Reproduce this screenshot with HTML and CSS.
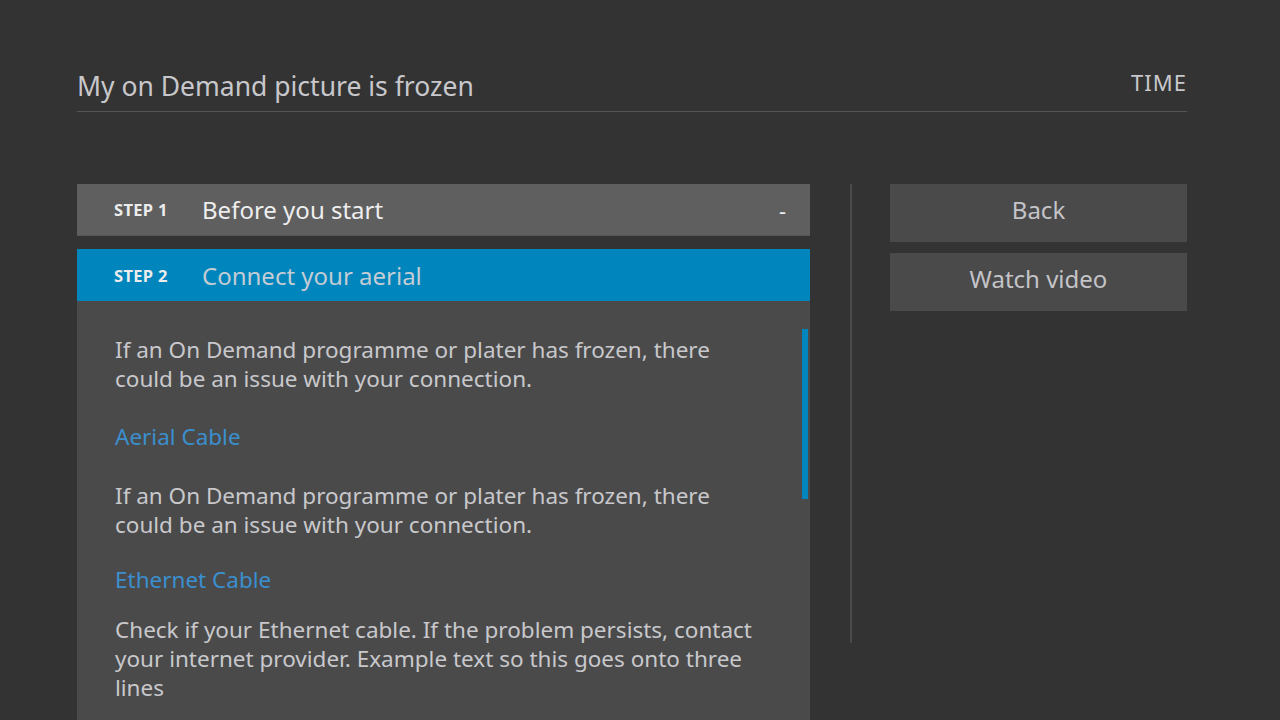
FILE: index.html
```html
<!DOCTYPE html>
<html lang="en">
<head>
<meta charset="utf-8">
<title>My on Demand picture is frozen</title>
<link rel="stylesheet" href="styles.css">
</head>
<body>
<div class="screen">
  <header class="topbar">
    <h1 class="title">My on Demand picture is frozen</h1>
    <div class="time">TIME</div>
  </header>
  <main class="main">
    <section class="steps">
      <div class="step step-done">
        <span class="step-label">STEP 1</span>
        <span class="step-title">Before you start</span>
        <span class="step-toggle">-</span>
      </div>
      <div class="step step-active">
        <span class="step-label">STEP 2</span>
        <span class="step-title">Connect your aerial</span>
      </div>
      <div class="step-body">
        <div class="scrollbar"></div>
        <p class="para p1">If an On Demand programme or plater has frozen, there could be an issue with your connection.</p>
        <h2 class="sub s1">Aerial Cable</h2>
        <p class="para p2">If an On Demand programme or plater has frozen, there could be an issue with your connection.</p>
        <h2 class="sub s2">Ethernet Cable</h2>
        <p class="para p3">Check if your Ethernet cable. If the problem persists, contact your internet provider. Example text so this goes onto three lines</p>
      </div>
    </section>
    <div class="divider"></div>
    <aside class="actions">
      <div class="btn">Back</div>
      <div class="btn">Watch video</div>
    </aside>
  </main>
</div>
</body>
</html>
```
FILE: styles.css
```css
* { box-sizing: border-box; }
html, body {
  margin: 0;
  padding: 0;
  width: 1280px;
  height: 720px;
  overflow: hidden;
  background: #333333;
  font-family: "Noto Sans", "Open Sans", sans-serif;
}
.screen {
  height: 720px;
  padding: 0 93px 0 77px;
  display: flex;
  flex-direction: column;
}
.topbar {
  display: flex;
  justify-content: space-between;
  align-items: flex-start;
  height: 112px;
  border-bottom: 1px solid #555555;
  padding-top: 66px;
}
.title {
  margin: 0;
  font-size: 26.5px;
  font-weight: 400;
  color: #c8c8cc;
  line-height: 40px;
}
.time {
  font-size: 22px;
  color: #c8c8cc;
  letter-spacing: 1px;
  line-height: 24px;
  margin-top: 4px;
}
.main {
  flex: 1;
  display: flex;
  margin-top: 72px;
  min-height: 0;
}
.steps {
  width: 733px;
  display: flex;
  flex-direction: column;
}
.step {
  height: 52px;
  display: flex;
  align-items: center;
  padding-left: 37px;
  padding-right: 24px;
}
.step-done {
  background: #5f5f5f;
  border-bottom: 1px solid #555;
  margin-bottom: 13px;
}
.step-active {
  background: #0085bd;
}
.step-label {
  width: 88px;
  font-size: 16.5px;
  font-weight: 700;
  color: #ececec;
  letter-spacing: 0.3px;
}
.step-title {
  flex: 1;
  font-size: 24px;
  color: #eeeeee;
}
.step-active .step-title {
  color: #c4ccd4;
}
.step-toggle {
  font-size: 22px;
  color: #eeeeee;
}
.step-body {
  position: relative;
  flex: 1;
  background: #4a4a4a;
  padding: 34px 45px 0 38px;
  overflow: hidden;
}
.scrollbar {
  position: absolute;
  right: 2px;
  top: 28px;
  width: 6px;
  height: 170px;
  background: #0085bd;
}
.para {
  margin: 0;
  font-size: 22.5px;
  line-height: 29px;
  color: #c8c8cc;
}
.sub {
  margin: 0;
  font-size: 22.5px;
  font-weight: 400;
  line-height: 29px;
  color: #3b8fce;
}
.s1 { margin-top: 29px; }
.p2 { margin-top: 30px; }
.s2 { margin-top: 26px; }
.p3 { margin-top: 21px; }
.divider {
  width: 2px;
  height: 459px;
  background: #4a4a4a;
  margin: 0 38px 0 40px;
}
.actions {
  width: 297px;
  display: flex;
  flex-direction: column;
  gap: 11px;
}
.btn {
  height: 58px;
  padding-bottom: 8px;
  background: #4a4a4a;
  color: #c4c4c8;
  font-size: 24px;
  display: flex;
  align-items: center;
  justify-content: center;
}
```
